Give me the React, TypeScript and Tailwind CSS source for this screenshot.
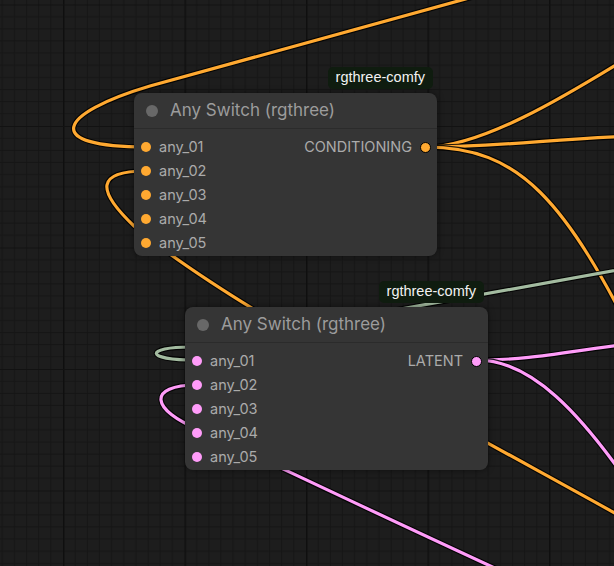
const ORANGE = '#ffa931'
const PINK = '#ff9cf9'
const SAGE = '#a3bba0'

const wires = [
  { d: 'M 146 147 C 42 147, 56 114, 150 86 L 480 -5', color: ORANGE },
  { d: 'M 146 171 C 96 171, 96 190, 134 226 C 220 300, 420 405, 640 527', color: ORANGE },
  { d: 'M 426 147 C 480 147, 560 100, 640 50', color: ORANGE },
  { d: 'M 426 147 C 500 147, 560 138, 640 136', color: ORANGE },
  { d: 'M 426 147 C 520 147, 565 200, 640 350', color: ORANGE },
  { d: 'M 197 360 C 142 360, 146 347, 190 347 L 640 266', color: SAGE },
  { d: 'M 477 360 C 540 360, 570 350, 640 343', color: PINK },
  { d: 'M 477 360 C 530 360, 580 410, 640 500', color: PINK },
  { d: 'M 197 385 C 147 385, 150 410, 200 430 C 265 460, 400 525, 560 598', color: PINK },
]

const inputs = ['any_01', 'any_02', 'any_03', 'any_04', 'any_05']

function Canvas() {
  const minor = Array.from({ length: 10 }, (_, i) => i * 12.15)
  return (
    <svg className="absolute inset-0 h-full w-full" width="614" height="566">
      <defs>
        <pattern id="grid" x="63" y="4.5" width="121.5" height="121.5" patternUnits="userSpaceOnUse">
          {minor.map(p => (
            <g key={p}>
              <line x1={p} y1="0" x2={p} y2="121.5" stroke="#151515" strokeWidth="1" />
              <line x1="0" y1={p} x2="121.5" y2={p} stroke="#151515" strokeWidth="1" />
            </g>
          ))}
          <line x1="0" y1="0" x2="0" y2="121.5" stroke="#0f0f0f" strokeWidth="3" />
          <line x1="0" y1="0" x2="121.5" y2="0" stroke="#121212" strokeWidth="2" />
        </pattern>
      </defs>
      <rect width="100%" height="100%" fill="#1d1d1d" />
      <rect width="100%" height="100%" fill="url(#grid)" />
      {wires.map((w, i) => (
        <g key={i} fill="none" strokeLinecap="round">
          <path d={w.d} stroke="rgba(0,0,0,0.85)" strokeWidth="5.5" />
          <path d={w.d} stroke={w.color} strokeWidth="3.2" />
        </g>
      ))}
    </svg>
  )
}

interface NodeProps {
  className: string
  dot: string
  output: string
}

function AnySwitch({ className, dot, output }: NodeProps) {
  return (
    <div className={`absolute w-[303px] rounded-lg bg-[#353535] shadow-[0_0_6px_rgba(0,0,0,0.5)] font-['Inter',sans-serif] ${className}`}>
      <div className="absolute -top-[26px] right-[4px] flex h-[22px] items-center rounded-[5px] bg-[#0f1c0f] px-[8px] font-['Liberation_Sans',Arial,sans-serif] text-[14.5px] text-[#f2f2f2]">
        rgthree-comfy
      </div>
      <div className="flex h-[36px] items-center gap-[12px] border-b border-[#2b2b2b] pl-[12px]">
        <span className="h-[12px] w-[12px] rounded-full bg-[#686868]" />
        <span className="text-[17px] text-[#9c9c9c]">Any Switch (rgthree)</span>
      </div>
      <div className="pb-[1px] pt-[6px]">
        {inputs.map((name, i) => (
          <div key={name} className="flex h-[24px] items-center pl-[7px] pr-[6px] text-[14.5px] text-[#ababab]">
            <span className="h-[10px] w-[10px] rounded-full" style={{ backgroundColor: dot }} />
            <span className="ml-[8px]">{name}</span>
            {i === 0 && (
              <div className="ml-auto flex items-center gap-[8px]">
                <span>{output}</span>
                <span className="h-[11px] w-[11px] rounded-full border border-black" style={{ backgroundColor: dot }} />
              </div>
            )}
          </div>
        ))}
      </div>
    </div>
  )
}

export default function App() {
  return (
    <div className="relative h-[566px] w-[614px] overflow-hidden bg-[#1d1d1d]">
      <Canvas />
      <AnySwitch className="left-[134px] top-[93px]" dot={ORANGE} output="CONDITIONING" />
      <AnySwitch className="left-[185px] top-[307px]" dot={PINK} output="LATENT" />
    </div>
  )
}
